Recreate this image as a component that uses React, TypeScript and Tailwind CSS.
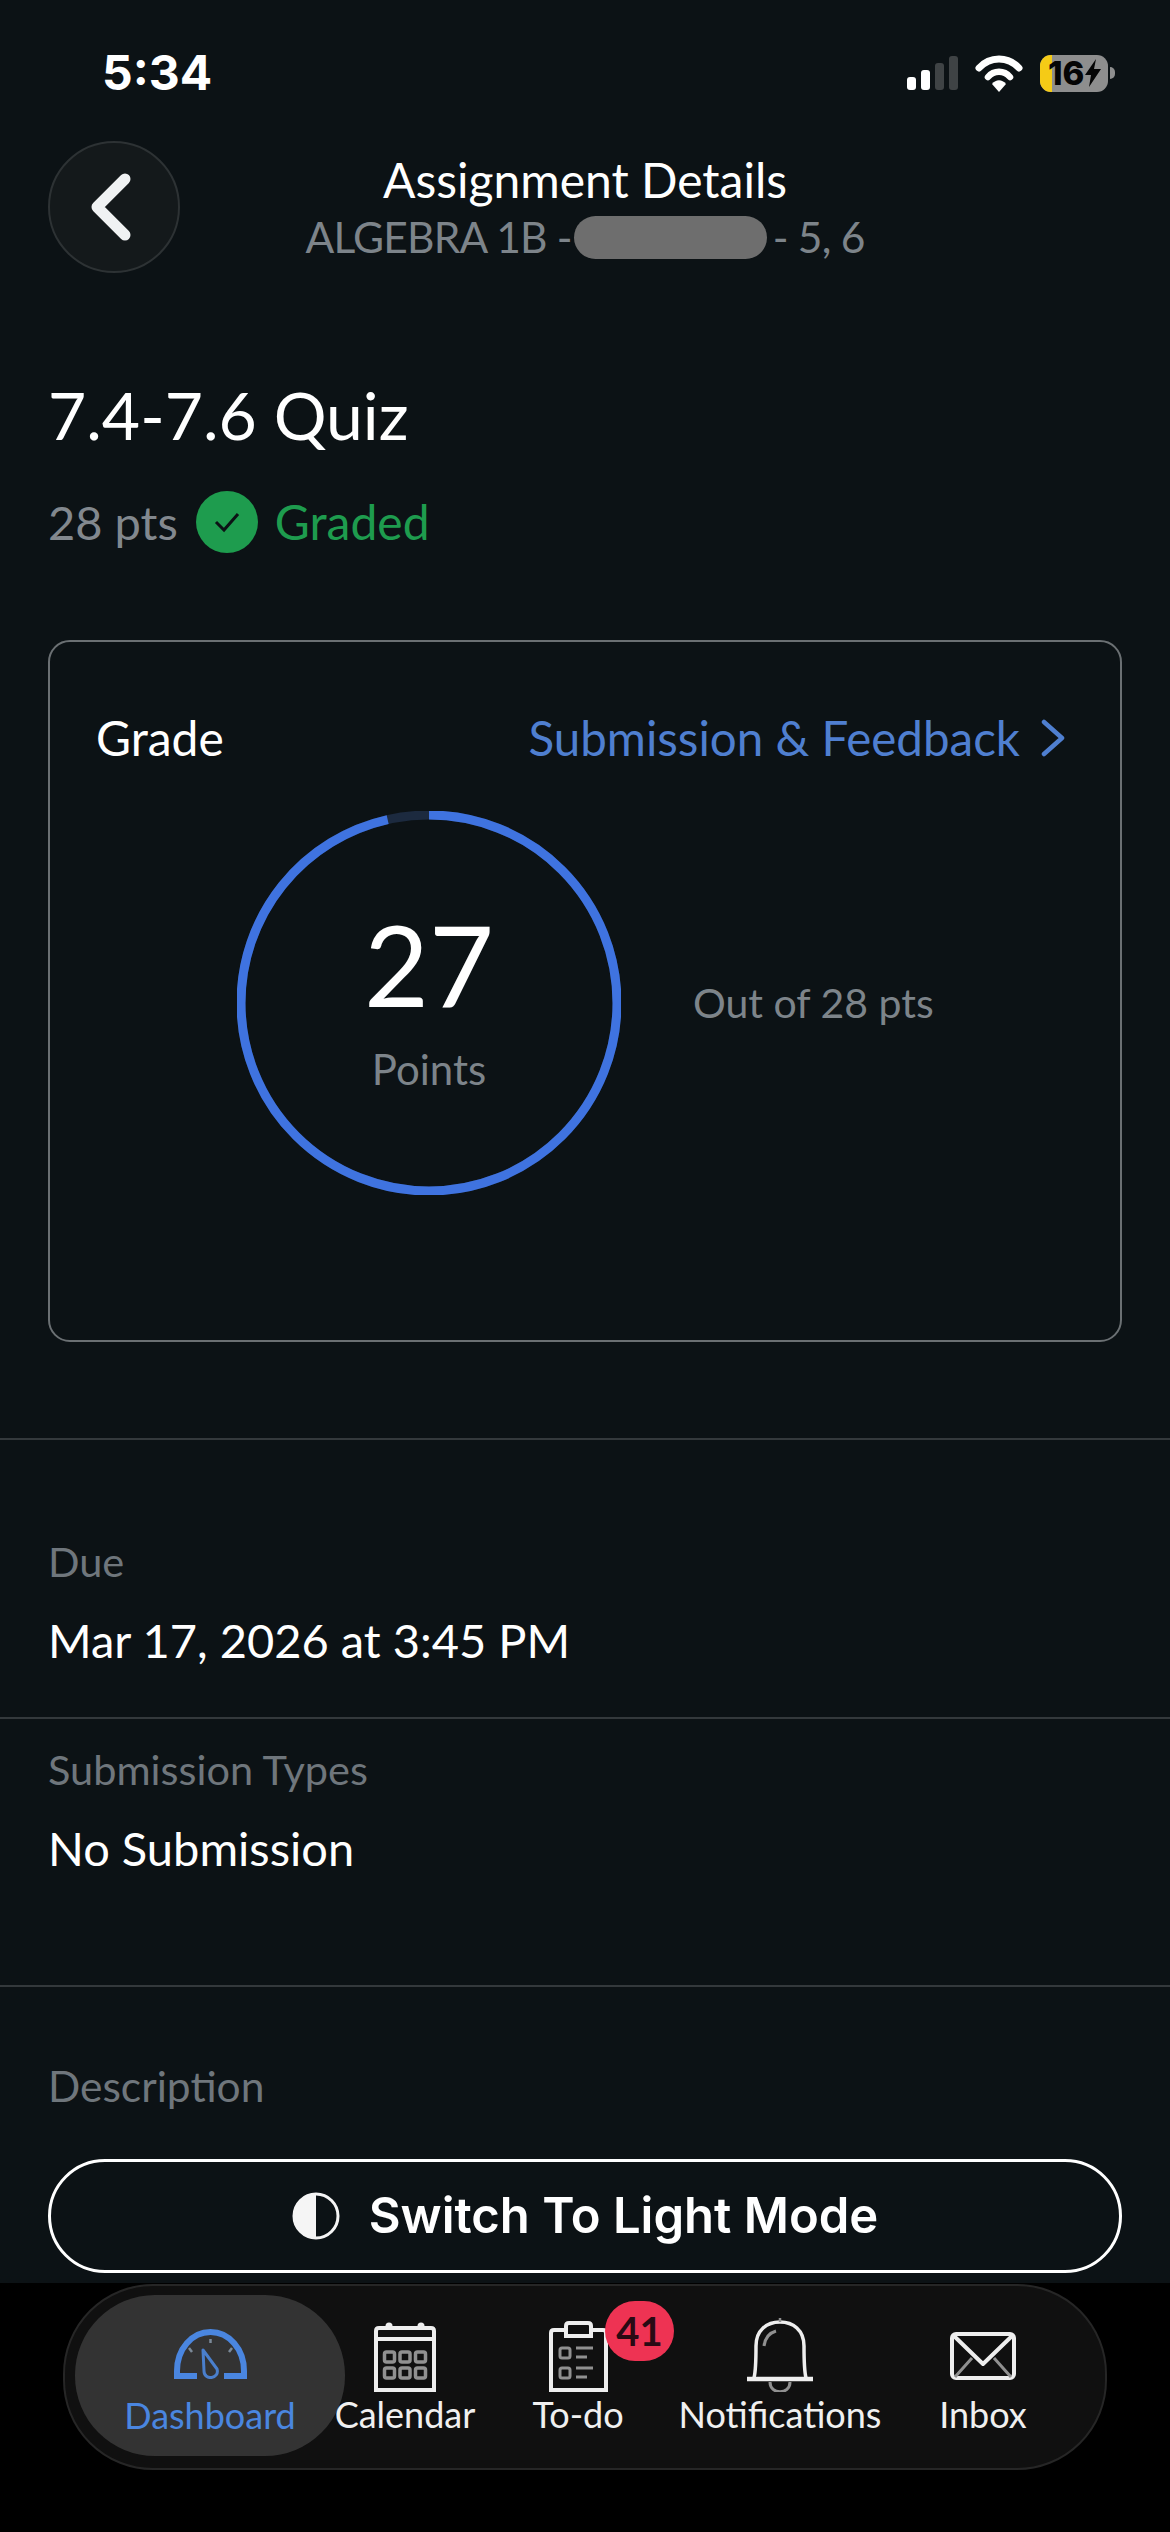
const lato = "font-['Lato',sans-serif]";

function StatusBar() {
  return (
    <div className="flex items-center justify-between h-[60px] mt-[43px] pl-[102px] pr-[55px]">
      <span className="font-['Inter',sans-serif] font-bold text-[48px] leading-none text-white">5:34</span>
      <div className="flex items-center gap-[17px]">
        <svg width="51" height="36" viewBox="0 0 51 36">
          <rect x="0" y="22" width="9" height="13" rx="3" fill="#fff" />
          <rect x="14" y="15" width="9" height="20" rx="3" fill="#fff" />
          <rect x="28" y="8" width="9" height="27" rx="3" fill="#3f4345" />
          <rect x="42" y="1" width="9" height="34" rx="3" fill="#3f4345" />
        </svg>
        <svg width="48" height="37" viewBox="0 0 48 37">
          <path d="M4 13 C15 1 33 1 44 13" fill="none" stroke="#fff" strokeWidth="7" strokeLinecap="round" />
          <path d="M13 22 C19 15 29 15 35 22" fill="none" stroke="#fff" strokeWidth="6.5" strokeLinecap="round" />
          <path d="M17 29 C21 24 27 24 31 29 L24 37 Z" fill="#fff" />
        </svg>
        <div className="relative flex items-center">
          <div className="w-[68px] h-[37px] rounded-[11px] bg-[#8e8e8e] overflow-hidden flex items-center">
            <div className="w-[12px] h-full bg-[#f5cb16]" />
          </div>
          <div className="w-[5px] h-[12px] ml-[2px] rounded-r-full bg-[#8e8e8e]" />
          <div className="absolute left-[8px] top-0 h-[37px] flex items-center gap-[1px]">
            <span className="font-['Inter',sans-serif] font-extrabold text-[33px] leading-none text-[#050505]">16</span>
            <svg width="16" height="28" viewBox="0 0 16 28">
              <path d="M11 0 L0 16 H6 L4 28 L16 10 H9 Z" fill="#050505" />
            </svg>
          </div>
        </div>
      </div>
    </div>
  );
}

function Header() {
  return (
    <div className="relative flex justify-center h-[132px] mt-[38px] mx-[48px]">
      <button className="absolute left-0 top-0 w-[132px] h-[132px] rounded-full bg-[#14191b] border-2 border-[#2d3234] flex items-center justify-center">
        <svg width="44" height="68" viewBox="0 0 44 68" className="mr-[6px]">
          <path d="M36 6 L8 34 L36 62" fill="none" stroke="#f0f2f3" strokeWidth="11" strokeLinecap="round" strokeLinejoin="round" />
        </svg>
      </button>
      <div className="flex flex-col items-center pt-[11px]">
        <span className="text-[48px] leading-[56px] text-white">Assignment Details</span>
        {/* teacher name is scribbled out in the screenshot */}
        <div className="flex items-center text-[42.5px] leading-[50px] tracking-[-0.8px] text-[#7d848a] mt-[4px]">
          <span>ALGEBRA 1B -</span>
          <span className="w-[193px] h-[43px] ml-[2px] rounded-full bg-[#6e6e6e]" />
          <span className="ml-[6px]">- 5, 6</span>
        </div>
      </div>
    </div>
  );
}

function GradeCard() {
  const radius = 188;
  const circumference = 2 * Math.PI * radius;
  const filled = (27 / 28) * circumference;
  return (
    <div className="mx-[48px] mt-[87px] h-[702px] rounded-[22px] border-2 border-[#6b7073]">
      <div className="flex items-center justify-between pl-[46px] pr-[54px] pt-[68px]">
        <span className="text-[48px] leading-[56px] text-white">Grade</span>
        <div className="flex items-center gap-[20px] text-[#4f7fd0]">
          <span className="text-[47.5px] leading-[56px]">Submission &amp; Feedback</span>
          <svg width="26" height="38" viewBox="0 0 26 38">
            <path d="M4 3 L22 19 L4 35" fill="none" stroke="#4f7fd0" strokeWidth="4.5" strokeLinecap="round" strokeLinejoin="round" />
          </svg>
        </div>
      </div>
      <div className="flex items-center pl-[187px] mt-[45px]">
        <div className="relative w-[384px] h-[384px] flex flex-col items-center justify-center pb-[8px]">
          <svg width="384" height="384" viewBox="0 0 384 384" className="absolute inset-0">
            <circle cx="192" cy="192" r={radius} fill="none" stroke="#1c2a3f" strokeWidth="9" />
            <circle
              cx="192"
              cy="192"
              r={radius}
              fill="none"
              stroke="#3f73e0"
              strokeWidth="9"
              strokeDasharray={`${filled} ${circumference}`}
              transform="rotate(-90 192 192)"
            />
          </svg>
          <span className="text-[112px] leading-[120px] text-white">27</span>
          <span className="text-[42px] leading-[50px] text-[#7d848a] mt-[20px]">Points</span>
        </div>
        <span className="text-[41px] leading-[50px] text-[#7d848a] ml-[72px]">Out of 28 pts</span>
      </div>
    </div>
  );
}

function Detail({ label, value }: { label: string; value: string }) {
  return (
    <div className="px-[48px]">
      <div className="text-[41.5px] leading-[50px] text-[#6f767c]">{label}</div>
      <div className="text-[47px] leading-[56px] text-white mt-[26px]">{value}</div>
    </div>
  );
}

function TabItem({ label, width, children }: { label: string; width: string; children: React.ReactNode }) {
  return (
    <div className={`relative flex flex-col items-center shrink-0 ${width}`}>
      <div className="h-[106px] flex items-end">{children}</div>
      <span className="text-[36px] leading-[44px] text-[#f0f0f0]">{label}</span>
    </div>
  );
}

function TabBar() {
  return (
    <div className="bg-black h-[249px] pt-[1px] px-[63px]">
      <div className="flex h-[186px] rounded-[90px] bg-[#101010] border-2 border-[#262626] pl-[10px]">
        <div className="w-[270px] h-[161px] mt-[9px] -mr-[10px] shrink-0 rounded-[80px] bg-[#333333] flex flex-col items-center">
          <svg width="73" height="50" viewBox="0 0 73 50" className="mt-[34px]">
            <path d="M23 47 H3 V42 C3 20 18 3 36.5 3 C55 3 70 20 70 42 V47 H50" fill="none" stroke="#4a86e0" strokeWidth="6" />
            <path d="M29 21 L43 40 C46 50 30 52 30 42 Z" fill="none" stroke="#4a7fcc" strokeWidth="3" strokeLinejoin="round" />
            <path d="M36.5 10 V14 M15 19 L18 23 M58 19 L55 23" stroke="#7c8a99" strokeWidth="2.5" />
          </svg>
          <span className="text-[36px] leading-[44px] text-[#4a86e0] mt-[14px]">Dashboard</span>
        </div>
        <TabItem label="Calendar" width="w-[140px]">
          <svg width="62" height="71" viewBox="0 0 62 71">
            <path d="M2 69 V10 Q2 7 5 7 H57 Q60 7 60 10 V69 Z M2 18 H60" fill="none" stroke="#eeeeee" strokeWidth="4" />
            <circle cx="15" cy="5" r="3.5" fill="#eeeeee" />
            <circle cx="47" cy="5" r="3.5" fill="#eeeeee" />
            <g fill="none" stroke="#909090" strokeWidth="3.5">
              <rect x="10.5" y="31" width="10" height="10" rx="2" />
              <rect x="26" y="31" width="10" height="10" rx="2" />
              <rect x="41.5" y="31" width="10" height="10" rx="2" />
              <rect x="10.5" y="47" width="10" height="10" rx="2" />
              <rect x="26" y="47" width="10" height="10" rx="2" />
              <rect x="41.5" y="47" width="10" height="10" rx="2" />
            </g>
          </svg>
        </TabItem>
        <TabItem label="To-do" width="w-[206px]">
          <svg width="59" height="71" viewBox="0 0 59 71">
            <path d="M17 9 H5 Q2 9 2 12 V69 H57 V12 Q57 9 54 9 H42" fill="none" stroke="#eeeeee" strokeWidth="4" />
            <path d="M17 15 V5 Q17 2 20 2 H39 Q42 2 42 5 V15 Z" fill="none" stroke="#eeeeee" strokeWidth="4" />
            <g fill="none" stroke="#909090" strokeWidth="3">
              <rect x="11" y="27" width="10" height="10" rx="2" />
              <rect x="11" y="47" width="10" height="10" rx="2" />
              <path d="M27 27 H44 M27 36 H38 M27 47 H44 M27 56 H38" />
            </g>
          </svg>
          <span className="absolute left-[130px] top-[15px] w-[69px] h-[60px] rounded-full bg-[#ee3353] flex items-center justify-center text-[40px] font-bold text-[#2a0a14]">41</span>
        </TabItem>
        <TabItem label="Notifications" width="w-[198px]">
          <svg width="66" height="74" viewBox="0 0 66 74">
            <path d="M7 60 C9 52 9 40 9 28 C9 12 20 4 33 4 C46 4 57 12 57 28 C57 40 57 52 59 60" fill="none" stroke="#eeeeee" strokeWidth="3.5" />
            <path d="M0 61 H66" stroke="#eeeeee" strokeWidth="4.5" />
            <path d="M33 0 V4" stroke="#909090" strokeWidth="2.5" />
            <path d="M23 64 C23 77 43 77 43 64" fill="none" stroke="#909090" strokeWidth="3" />
            <path d="M17 28 C18 20 22 15 29 13" fill="none" stroke="#909090" strokeWidth="3" />
          </svg>
        </TabItem>
        <TabItem label="Inbox" width="w-[208px]">
          <svg width="66" height="48" viewBox="0 0 66 48" className="mb-[12px]">
            <rect x="2" y="2" width="62" height="44" rx="4" fill="none" stroke="#eeeeee" strokeWidth="4" />
            <path d="M4 4 L33 32 L62 4" fill="none" stroke="#eeeeee" strokeWidth="4" strokeLinejoin="round" />
            <path d="M5 45 L22 26 M61 45 L44 26" stroke="#909090" strokeWidth="3" />
          </svg>
        </TabItem>
      </div>
    </div>
  );
}

export default function App() {
  return (
    <div className={`w-[1170px] h-[2532px] bg-[#0c1215] overflow-hidden flex flex-col ${lato}`}>
      <StatusBar />
      <Header />
      <div className="px-[48px] mt-[102px]">
        <h1 className="text-[66px] leading-[80px] text-white">7.4-7.6 Quiz</h1>
        <div className="flex items-center mt-[36px] h-[62px]">
          <span className="text-[47px] text-[#82888e]">28 pts</span>
          <span className="w-[62px] h-[62px] rounded-full bg-[#1e9c4e] flex items-center justify-center ml-[18px]">
            <svg width="30" height="24" viewBox="0 0 30 24"><path d="M4 12 L12 20 L26 4" fill="none" stroke="#0c1215" strokeWidth="3" /></svg>
          </span>
          <span className="text-[48px] text-[#1e9c4e] ml-[17px]">Graded</span>
        </div>
      </div>
      <GradeCard />
      <div className="h-[2px] bg-[#34393c] mt-[96px]" />
      <div className="pt-[96px] pb-[49px]">
        <Detail label="Due" value="Mar 17, 2026 at 3:45 PM" />
      </div>
      <div className="h-[2px] bg-[#34393c]" />
      <div className="pt-[25px] pb-[109px]">
        <Detail label="Submission Types" value="No Submission" />
      </div>
      <div className="h-[2px] bg-[#34393c]" />
      <div className="px-[48px] pt-[74px] text-[42.5px] leading-[50px] text-[#6f767c]">Description</div>
      <div className="mx-[48px] mt-[48px] h-[114px] rounded-[57px] border-[3px] border-white flex items-center justify-center gap-[29px]">
        <svg width="48" height="48" viewBox="0 0 48 48">
          <circle cx="24" cy="24" r="22" fill="none" stroke="#f5f5f5" strokeWidth="3" />
          <path d="M24 2 A22 22 0 0 0 24 46 Z" fill="#f5f5f5" />
        </svg>
        <span className="font-['Inter',sans-serif] font-semibold text-[49px] text-white">Switch To Light Mode</span>
      </div>
      <div className="mt-[10px]">
        <TabBar />
      </div>
    </div>
  );
}
